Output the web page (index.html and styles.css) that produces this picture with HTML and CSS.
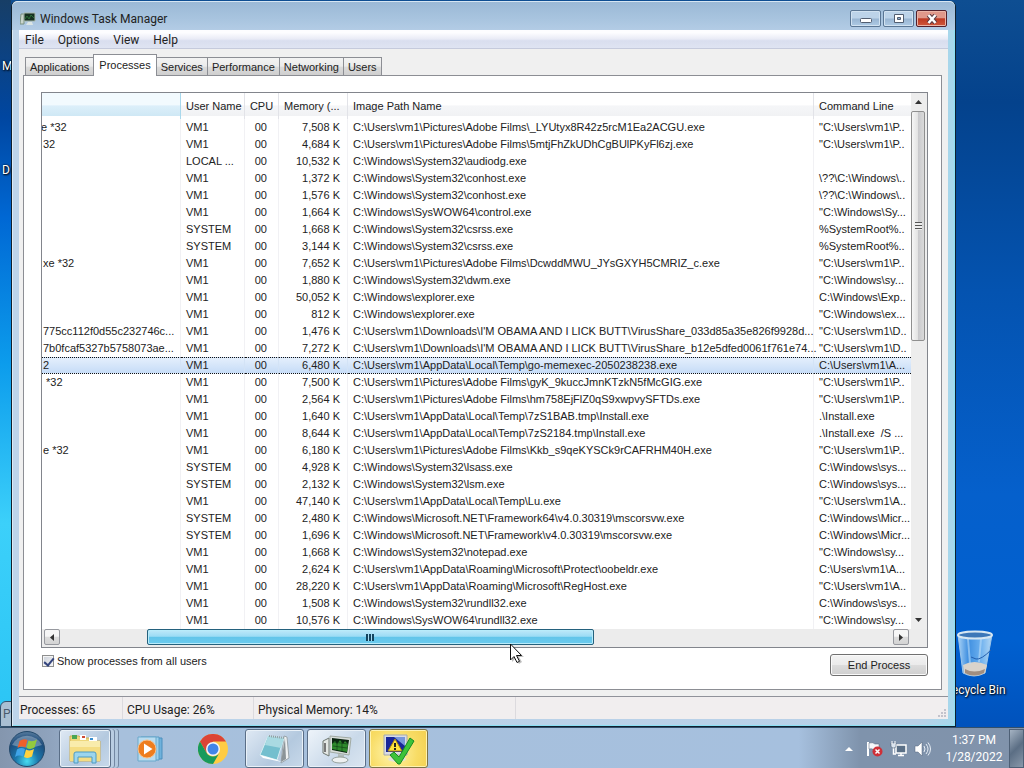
FILE: index.html
```html
<!DOCTYPE html>
<html lang="en">
<head>
<meta charset="utf-8">
<title>Windows Task Manager</title>
<link rel="stylesheet" href="styles.css">
</head>
<body>
<main class="desktop">
  <span class="desk-label label-m">M</span>
  <span class="desk-label label-d">D</span>
  <span class="back-window">P</span>
  <div class="recycle">
    <svg width="38" height="48" viewBox="0 0 38 48" aria-hidden="true">
      <defs><linearGradient id="bin" x1="0" x2="1"><stop offset="0" stop-color="#a9d2f5"/><stop offset=".3" stop-color="#3f8fe0"/><stop offset=".65" stop-color="#69aeee"/><stop offset="1" stop-color="#b5d8f4"/></linearGradient></defs>
      <path d="M2 5 L7 43 Q18 49 29 43 L36 5Z" fill="url(#bin)" stroke="#9cc6ea"/>
      <path d="M7 35 Q18 29 31 35 L29 43 Q18 49 8 43Z" fill="#d9d3cb"/>
      <path d="M9 39 Q18 44 29 39 L28 43 Q18 48 9 43Z" fill="#a18e80"/>
      <path d="M12 9 L14 34 M25 9 L23 32" stroke="#b9dcf8" stroke-width="2" opacity=".6"/>
      <path d="M35 20 Q25 30 20 29 L15 27" fill="none" stroke="#245fae"/>
      <ellipse cx="19" cy="5" rx="17" ry="3.5" fill="#3c77b8" stroke="#d5e6f2" stroke-width="2"/>
    </svg>
    <span>Recycle Bin</span>
  </div>

  <section class="window" aria-label="Windows Task Manager">
    <header class="titlebar">
      <svg width="16" height="14" viewBox="0 0 16 14" aria-hidden="true"><path d="M1 2h3v10H0z" fill="#c9d5cc" stroke="#7b9180"/><path d="M4 1h11v8H4z" fill="#153020" stroke="#a9b8ac"/><path d="M5 7l2-3 2 3 2-4 3 3" fill="none" stroke="#2b6f38"/><path d="M8 10h4l1 3H6z" fill="#dbe5e5"/></svg>
      <h1>Windows Task Manager</h1>
      <div class="caption-buttons">
        <button type="button" aria-label="Minimize"><svg width="14" height="10" viewBox="0 0 14 10"><rect x="1.500" y="4.500" width="11" height="4" rx="1" fill="#fff" stroke="#515d70"/></svg></button>
        <button type="button" aria-label="Maximize"><svg width="14" height="10" viewBox="0 0 14 10"><path d="M2.500 .5h9v8h-9z" fill="#fff" stroke="#515d70"/><path d="M5.500 3.500h3v2h-3z" fill="#8fb0d2" stroke="#515d70"/></svg></button>
        <button type="button" class="close" aria-label="Close"><svg width="14" height="10" viewBox="0 0 14 10"><path d="M3.500 1l7 8M10.500 1l-7 8" stroke="#5b3b42" stroke-width="4.500"/><path d="M3.500 1l7 8M10.500 1l-7 8" stroke="#fff" stroke-width="2.500"/></svg></button>
      </div>
    </header>
    <div class="client">
      <nav class="menubar">
        <button type="button">File</button><button type="button">Options</button><button type="button">View</button><button type="button">Help</button>
      </nav>
      <div class="tabs" role="tablist">
        <button type="button" role="tab">Applications</button><button type="button" role="tab" class="active" aria-selected="true">Processes</button><button type="button" role="tab">Services</button><button type="button" role="tab">Performance</button><button type="button" role="tab">Networking</button><button type="button" role="tab">Users</button>
      </div>
      <div class="panel">
        <div class="list">
          <div class="table-wrap">
            <table>
              <colgroup><col class="c-name"><col class="c-user"><col class="c-cpu"><col class="c-mem"><col class="c-path"><col class="c-cmd"></colgroup>
              <thead><tr><th aria-label="Image Name"></th><th>User Name</th><th>CPU</th><th>Memory (...</th><th>Image Path Name</th><th>Command Line</th></tr></thead>
              <tbody>
                <tr><td class="cut">e *32</td><td>VM1</td><td>00</td><td>7,508 K</td><td>C:\Users\vm1\Pictures\Adobe Films\_LYUtyx8R42z5rcM1Ea2ACGU.exe</td><td>"C:\Users\vm1\P..</td></tr>
                <tr><td>32</td><td>VM1</td><td>00</td><td>4,684 K</td><td>C:\Users\vm1\Pictures\Adobe Films\5mtjFhZkUDhCgBUlPKyFl6zj.exe</td><td>"C:\Users\vm1\P..</td></tr>
                <tr><td></td><td>LOCAL ...</td><td>00</td><td>10,532 K</td><td>C:\Windows\System32\audiodg.exe</td><td></td></tr>
                <tr><td></td><td>VM1</td><td>00</td><td>1,372 K</td><td>C:\Windows\System32\conhost.exe</td><td>\??\C:\Windows\..</td></tr>
                <tr><td></td><td>VM1</td><td>00</td><td>1,576 K</td><td>C:\Windows\System32\conhost.exe</td><td>\??\C:\Windows\..</td></tr>
                <tr><td></td><td>VM1</td><td>00</td><td>1,664 K</td><td>C:\Windows\SysWOW64\control.exe</td><td>"C:\Windows\Sy...</td></tr>
                <tr><td></td><td>SYSTEM</td><td>00</td><td>1,668 K</td><td>C:\Windows\System32\csrss.exe</td><td>%SystemRoot%..</td></tr>
                <tr><td></td><td>SYSTEM</td><td>00</td><td>3,144 K</td><td>C:\Windows\System32\csrss.exe</td><td>%SystemRoot%..</td></tr>
                <tr><td>xe *32</td><td>VM1</td><td>00</td><td>7,652 K</td><td>C:\Users\vm1\Pictures\Adobe Films\DcwddMWU_JYsGXYH5CMRIZ_c.exe</td><td>"C:\Users\vm1\P..</td></tr>
                <tr><td></td><td>VM1</td><td>00</td><td>1,880 K</td><td>C:\Windows\System32\dwm.exe</td><td>"C:\Windows\sy...</td></tr>
                <tr><td></td><td>VM1</td><td>00</td><td>50,052 K</td><td>C:\Windows\explorer.exe</td><td>C:\Windows\Exp..</td></tr>
                <tr><td></td><td>VM1</td><td>00</td><td>812 K</td><td>C:\Windows\explorer.exe</td><td>"C:\Windows\ex...</td></tr>
                <tr><td>775cc112f0d55c232746c...</td><td>VM1</td><td>00</td><td>1,476 K</td><td>C:\Users\vm1\Downloads\I'M OBAMA AND I LICK BUTT\VirusShare_033d85a35e826f9928d...</td><td>"C:\Users\vm1\D..</td></tr>
                <tr><td>7b0fcaf5327b5758073ae...</td><td>VM1</td><td>00</td><td>7,272 K</td><td>C:\Users\vm1\Downloads\I'M OBAMA AND I LICK BUTT\VirusShare_b12e5dfed0061f761e74...</td><td>"C:\Users\vm1\D..</td></tr>
                <tr class="selected"><td>2</td><td>VM1</td><td>00</td><td>6,480 K</td><td>C:\Users\vm1\AppData\Local\Temp\go-memexec-2050238238.exe</td><td>C:\Users\vm1\A...</td></tr>
                <tr><td>&nbsp;*32</td><td>VM1</td><td>00</td><td>7,500 K</td><td>C:\Users\vm1\Pictures\Adobe Films\gyK_9kuccJmnKTzkN5fMcGIG.exe</td><td>"C:\Users\vm1\P..</td></tr>
                <tr><td></td><td>VM1</td><td>00</td><td>2,564 K</td><td>C:\Users\vm1\Pictures\Adobe Films\hm758EjFlZ0qS9xwpvySFTDs.exe</td><td>"C:\Users\vm1\P..</td></tr>
                <tr><td></td><td>VM1</td><td>00</td><td>1,640 K</td><td>C:\Users\vm1\AppData\Local\Temp\7zS1BAB.tmp\Install.exe</td><td>.\Install.exe</td></tr>
                <tr><td></td><td>VM1</td><td>00</td><td>8,644 K</td><td>C:\Users\vm1\AppData\Local\Temp\7zS2184.tmp\Install.exe</td><td>.\Install.exe&nbsp; /S ...</td></tr>
                <tr><td>e *32</td><td>VM1</td><td>00</td><td>6,180 K</td><td>C:\Users\vm1\Pictures\Adobe Films\Kkb_s9qeKYSCk9rCAFRHM40H.exe</td><td>"C:\Users\vm1\P..</td></tr>
                <tr><td></td><td>SYSTEM</td><td>00</td><td>4,928 K</td><td>C:\Windows\System32\lsass.exe</td><td>C:\Windows\sys...</td></tr>
                <tr><td></td><td>SYSTEM</td><td>00</td><td>2,132 K</td><td>C:\Windows\System32\lsm.exe</td><td>C:\Windows\sys...</td></tr>
                <tr><td></td><td>VM1</td><td>00</td><td>47,140 K</td><td>C:\Users\vm1\AppData\Local\Temp\Lu.exe</td><td>"C:\Users\vm1\A..</td></tr>
                <tr><td></td><td>SYSTEM</td><td>00</td><td>2,480 K</td><td>C:\Windows\Microsoft.NET\Framework64\v4.0.30319\mscorsvw.exe</td><td>C:\Windows\Micr...</td></tr>
                <tr><td></td><td>SYSTEM</td><td>00</td><td>1,696 K</td><td>C:\Windows\Microsoft.NET\Framework\v4.0.30319\mscorsvw.exe</td><td>C:\Windows\Micr...</td></tr>
                <tr><td></td><td>VM1</td><td>00</td><td>1,668 K</td><td>C:\Windows\System32\notepad.exe</td><td>"C:\Windows\sy...</td></tr>
                <tr><td></td><td>VM1</td><td>00</td><td>2,624 K</td><td>C:\Users\vm1\AppData\Roaming\Microsoft\Protect\oobeldr.exe</td><td>C:\Users\vm1\A...</td></tr>
                <tr><td></td><td>VM1</td><td>00</td><td>28,220 K</td><td>C:\Users\vm1\AppData\Roaming\Microsoft\RegHost.exe</td><td>"C:\Users\vm1\A..</td></tr>
                <tr><td></td><td>VM1</td><td>00</td><td>1,508 K</td><td>C:\Windows\System32\rundll32.exe</td><td>C:\Windows\sys...</td></tr>
                <tr><td></td><td>VM1</td><td>00</td><td>10,576 K</td><td>C:\Windows\SysWOW64\rundll32.exe</td><td>"C:\Windows\sy...</td></tr>
              </tbody>
            </table>
          </div>
          <div class="vscroll">
            <button type="button" aria-label="Scroll up"><svg width="7" height="4" viewBox="0 0 7 4"><path d="M0 4L3.500 0 7 4z" fill="#333"/></svg></button>
            <div class="vtrack"><div class="vthumb"><i></i></div></div>
            <button type="button" aria-label="Scroll down"><svg width="7" height="4" viewBox="0 0 7 4"><path d="M0 0h7L3.500 4z" fill="#333"/></svg></button>
          </div>
          <div class="hscroll">
            <button type="button" aria-label="Scroll left"><svg width="4" height="7" viewBox="0 0 4 7"><path d="M4 0v7L0 3.500z" fill="#333"/></svg></button>
            <div class="htrack"><div class="hthumb"><i></i></div></div>
            <button type="button" aria-label="Scroll right"><svg width="4" height="7" viewBox="0 0 4 7"><path d="M0 0v7l4-3.500z" fill="#333"/></svg></button>
          </div>
        </div>
        <div class="actions">
          <label><input type="checkbox" checked>Show processes from all users</label>
          <button type="button" class="end">End Process</button>
        </div>
      </div>
      <footer class="statusbar">
        <span class="s1">Processes: 65</span><span class="s2">CPU Usage: 26%</span><span class="s3">Physical Memory: 14%</span>
        <svg class="grip" width="10" height="10" viewBox="0 0 10 10" aria-hidden="true"><path d="M7 1h2v2H7zM4 4h2v2H4zM7 4h2v2H7zM1 7h2v2H1zM4 7h2v2H4zM7 7h2v2H7z" fill="#c3c3cc"/></svg>
      </footer>
    </div>
  </section>
  <svg class="cursor" width="15" height="22" viewBox="0 0 15 22" aria-hidden="true"><path d="M3 3v16l4-4 3 6 3-2-3-5h5z" fill="#000" opacity=".25"/><path d="M1.500 1v16l3.500-3.500 3 6 2.500-1.200-3-5.800h5z" fill="#fff" stroke="#111"/></svg>
</main>

<footer class="taskbar">
  <button type="button" class="start" aria-label="Start">
    <svg width="38" height="38" viewBox="0 0 38 38">
      <defs><radialGradient id="orb" cx=".5" cy=".85" r=".8"><stop offset="0" stop-color="#47dcf0"/><stop offset=".4" stop-color="#1b78ac"/><stop offset=".8" stop-color="#1d4c7c"/><stop offset="1" stop-color="#4c7297"/></radialGradient></defs>
      <circle cx="19" cy="19" r="17.500" fill="url(#orb)" stroke="#23496b"/>
      <path d="M4 15A16 14 0 0 1 34 15Q19 20 4 15z" fill="#fff" opacity=".3"/>
      <path d="M11.500 11q4-3 8-1l-2 7.500q-4-2-8 .5z" fill="#f0602b"/><path d="M20.500 10.500q4 2 8.500-1l-2.500 8q-4 2.500-8 .5z" fill="#93ca3e"/>
      <path d="M9 19.500q4-2.500 8-.5l-2 7.500q-4-2-8 .5z" fill="#3fa4e8"/><path d="M18 19.500q4 2 8-.5l-2 7.500q-4 2.500-8 .5z" fill="#ffd23f"/>
    </svg>
  </button>
  <button type="button" class="task stacked" aria-label="Windows Explorer">
    <svg width="34" height="32" viewBox="0 0 34 32"><path d="M2 3h9l2 2h9v3h10v20H2z" fill="#eed77c" stroke="#cdb059"/><path d="M4 2h5v4H4z" fill="#49a553"/><path d="M12 2h6v5h-6z" fill="#fff"/><path d="M14 3h3v2h-3z" fill="#cf4b35"/><path d="M21 4h8v4h-8z" fill="#fff"/><path d="M22 5h3v2h-3z" fill="#3b8fd0"/><path d="M2 8h30v20H2z" fill="#f9ecac"/><path d="M2 14h30v14H2z" fill="#f4dd83"/><path d="M6 30v-9q0-2 2-2h18q2 0 2 2v9h-4v-6H10v6z" fill="#9bd5ee" stroke="#4d9bc3"/></svg>
  </button>
  <button type="button" class="launch wmp" aria-label="Windows Media Player">
    <svg width="28" height="28" viewBox="0 0 28 28"><path d="M8 3h18v21H8z" fill="#6fb2dc" stroke="#4c8fbd"/><path d="M5 2h18v23H5z" fill="#9dd0ec" stroke="#599dc6"/><path d="M2 2h18v24H2z" fill="#b9dcf0" stroke="#6aa9cb"/><circle cx="11" cy="14" r="9" fill="#ee7d1e" stroke="#f8c08a"/><path d="M8 8.500v11l8.500-5.500z" fill="#fff"/></svg>
  </button>
  <button type="button" class="launch chrome" aria-label="Google Chrome">
    <svg width="30" height="30" viewBox="0 0 30 30"><circle cx="15" cy="15" r="15" fill="#fc4"/><path d="M2 7.500A15 15 0 0 1 28 7.500H15L8.500 18.750z" fill="#dc4436"/><path d="M2 7.500L8.500 18.750A7.500 7.500 0 0 0 21.500 18.750L15 30A15 15 0 0 1 2 7.500z" fill="#179a5c"/><circle cx="15" cy="15" r="7" fill="#f4f6f8"/><circle cx="15" cy="15" r="5.500" fill="#4285e8"/></svg>
  </button>
  <button type="button" class="task" aria-label="Notepad">
    <svg width="34" height="32" viewBox="0 0 34 32"><path d="M26 3l3 1 2 21-8 5z" fill="#eef1f2" stroke="#9aa5ab"/><path d="M27 5l1 21-5 3z" fill="#8b9498"/><path d="M10 3l16 2-7 22-17-5z" fill="#74bfce" stroke="#d6eef2"/><path d="M10 3l16 2-3 10-16-3z" fill="#a9dae2"/><path d="M2 22l17 5 5 2-19-4z" fill="#fff"/><path d="M11 3l15 2" stroke="#919da1" stroke-width="2" stroke-dasharray="1 1"/></svg>
  </button>
  <button type="button" class="task current" aria-label="Windows Task Manager">
    <svg width="34" height="32" viewBox="0 0 34 32"><path d="M3 8l6-3v18l-6-3z" fill="#e3e7e4" stroke="#6e7771"/><path d="M5 10v9" stroke="#777" stroke-width="2"/><path d="M10 3l21 2-2 17-19-3z" fill="#d8deda" stroke="#a1aaa3"/><path d="M12 5l17 2-2 13-15-3z" fill="#0c2411"/><path d="M12 11l3-3 2 3 3-4 3 4 2-3 3 3-1 8-15-3z" fill="#2f8a2c"/><path d="M13 9l15 2M13 13l14 2M17 6v12M22 7v12" stroke="#0f3a14" stroke-width=".6"/><path d="M18 21l6 1v4h-6z" fill="#b2bbb8"/><ellipse cx="20" cy="27" rx="8" ry="3" fill="#eef1f1" stroke="#96a19c"/></svg>
  </button>
  <button type="button" class="task alert" aria-label="Warning">
    <svg width="34" height="32" viewBox="0 0 34 32"><path d="M2 2h23v20H2z" fill="#d9dce4" stroke="#a5a8ae"/><path d="M4 4h19v15H4z" fill="#192699"/><path d="M12 4h11v9z" fill="#7796db"/><ellipse cx="15" cy="26" rx="9" ry="3" fill="#e3e1da"/><path d="M13 6l7 12H6z" fill="#ffe33c" stroke="#a98612"/><path d="M13 10v4M13 15v2" stroke="#222" stroke-width="2"/><path d="M8 22l4-3 5 5L28 5l4 3-14 23h-2z" fill="#3dc33a" stroke="#178b24"/></svg>
  </button>
  <div class="tray">
    <svg class="chev" width="9" height="6" viewBox="0 0 9 6" aria-hidden="true"><path d="M0 5h8L4 1z" fill="#fff"/></svg>
    <svg width="18" height="16" viewBox="0 0 18 16" aria-hidden="true"><path d="M2 1v14" stroke="#fff" stroke-width="2"/><path d="M3 2q4-1 6 1h4v6H8q-2-2-5-1z" fill="#f6f8fb" stroke="#56667b" stroke-width=".5"/><circle cx="11.500" cy="10.500" r="5" fill="#cf3038"/><path d="M9.500 8.500l4 4M13.500 8.500l-4 4" stroke="#fff" stroke-width="1.500"/></svg>
    <svg width="18" height="16" viewBox="0 0 18 16" aria-hidden="true"><path d="M6 4h10v8H6z" fill="#5b7087" stroke="#fff" stroke-width="1.500"/><path d="M8 14.500h6M11 12v2M3.500 7v6H6" fill="none" stroke="#fff" stroke-width="1.500"/><path d="M1 2h5v3q0 2-2.500 2T1 5z" fill="#dce5ef" stroke="#45566b" stroke-width=".5"/><path d="M2 0v3M5 0v3" stroke="#fff"/></svg>
    <svg width="18" height="16" viewBox="0 0 18 16" aria-hidden="true"><path d="M1 5h3l4-4v14l-4-4H1z" fill="#fff" stroke="#54667d" stroke-width=".5"/><path d="M10 5q2 3 0 6M12 3q4 5 0 10M14 1.500q5 6.500 0 13" fill="none" stroke="#e7eef6"/></svg>
  </div>
  <time class="clock" datetime="2022-01-28T13:37"><span>1:37 PM</span><span>1/28/2022</span></time>
  <button type="button" class="show-desktop" aria-label="Show desktop"></button>
</footer>
</body>
</html>
```
FILE: styles.css
```css
* { box-sizing: border-box; }
body {
  margin: 0;
  display: flex;
  flex-direction: column;
  min-height: 100vh;
  font-family: Roboto, sans-serif;
  font-size: 12px;
  color: #222;
  overflow: hidden;
}
button { font: inherit; color: inherit; margin: 0; padding: 0; border: 0; background: none; }
svg { display: block; flex: none; }

.desktop {
  position: relative;
  flex: 1;
  padding: 1px 68px 0 11px;
  display: flex;
  background:
    linear-gradient(#173e66, #0046a0 16%, #0068d4 30%, #0c9cec 50%, #3cd0fa 72%, #2ac4f4 100%) left / 11px 100% no-repeat,
    linear-gradient(#0e4e92, #04428c 14%, #0453b0 40%, #0560cc 68%, #0060d0 88%, #0052bc);
}
.desk-label, .recycle { color: #fff; text-shadow: 1px 1px 2px #000, 0 0 2px #000; }
.desk-label { position: absolute; left: 2px; line-height: 16px; }
.label-m { top: 58px; }
.label-d { top: 162px; }
.back-window {
  position: absolute;
  left: 0;
  bottom: 0;
  width: 24px;
  height: 26px;
  padding: 5px 2px;
  border: 1px solid #33516e;
  border-radius: 6px 0 0 0;
  background: #a9bfd3;
  color: #4a5b6d;
}
.recycle {
  position: absolute;
  right: 18px;
  bottom: 29px;
  width: 62px;
  display: flex;
  flex-direction: column;
  align-items: center;
  gap: 4px;
  line-height: 16px;
  white-space: nowrap;
}

.window {
  position: relative;
  flex: 1;
  min-width: 0;
  display: flex;
  flex-direction: column;
  padding: 0 7px 7px;
  border: solid #10202e;
  border-width: 0 1px 1px;
  border-radius: 6px 6px 0 0;
  background: linear-gradient(90deg, #bdd4ea, #b8d0e7 96%, #a5d8ec);
  box-shadow: inset 1px 1px 0 #dcebf6, inset -1px -1px 0 #8ce0f4;
}
.titlebar {
  display: flex;
  align-items: center;
  height: 29px;
  margin: 0 -7px;
  padding: 5px 8px 0 8px;
  border-radius: 6px 6px 0 0;
  gap: 4px;
  border-top: 1px solid #d6e6f3;
  background: linear-gradient(#9bb9d6, #a8c4df 60%, #b3cce5);
}
.titlebar h1 { flex: 1; margin: 0; font-size: 12px; font-weight: 400; line-height: 16px; }
.caption-buttons { display: flex; gap: 2px; }
.caption-buttons button {
  display: flex;
  align-items: center;
  justify-content: center;
  width: 31px;
  height: 17px;
  border: 1px solid #5a7694;
  border-radius: 2px;
  background: linear-gradient(#bcd3e9 48%, #98b5d2 52%, #aecae4);
  box-shadow: inset 0 0 0 1px #d1e2f1;
}
.caption-buttons .close {
  border-color: #52202c;
  background: linear-gradient(#e0988a 45%, #bd3a23 52%, #d0583c);
  box-shadow: inset 0 0 0 1px #eab4a6;
}
.client { flex: 1; display: flex; flex-direction: column; background: #f0f0f0; }
.menubar {
  display: flex;
  height: 19px;
  padding-left: 6px;
  gap: 14px;
  padding-top: 2px;
  line-height: 16px;
  background: linear-gradient(#fdfdff 15%, #e9ebf6 50%, #d9deef 60%, #dfe4f2);
  border-bottom: 1px solid #c5cadc;
}
.tabs, .list, .actions { font-family: "Liberation Sans", Arial, sans-serif; font-size: 11px; }
.tabs { display: flex; align-items: flex-end; height: 26px; padding-left: 6px; }
.tabs button {
  height: 18px;
  padding: 0 4px;
  line-height: 18px;
  border: 1px solid #8c8e94;
  border-bottom: 0;
  border-left-width: 0;
  background: linear-gradient(#f3f3f3, #ebebeb 48%, #dadada 54%, #cfcfcf);
}
.tabs button:first-child { border-left-width: 1px; }
.tabs .active {
  position: relative;
  height: 22px;
  padding: 0 5px 2px;
  margin: 0 0 -1px -1px;
  border-left-width: 1px;
  background: #fff;
}
.panel {
  flex: 1;
  display: flex;
  flex-direction: column;
  margin: 0 6px 0 4px;
  padding: 16px 13px 0 17px;
  border: 1px solid #8c8e94;
  background: #fff;
}
.list {
  display: grid;
  grid-template-columns: minmax(0, 1fr) 16px;
  grid-template-rows: auto 18px;
  border: 1px solid #82858c;
}
.table-wrap { overflow: hidden; }
table { width: 100%; table-layout: fixed; border-collapse: separate; border-spacing: 0; }
.c-name { width: 139px; }
.c-user { width: 64px; }
.c-cpu { width: 34px; }
.c-mem { width: 69px; }
.c-cmd { width: 97px; }
th, td { padding: 0 0 0 5px; text-align: left; font-weight: 400; white-space: nowrap; overflow: hidden; border-right: 1px solid #f1f1f4; }
th { height: 26px; border-right-color: #e2e3e8; background: linear-gradient(#fff 45%, #f5f6f8 50%, #f1f2f4 88%, #fff 90%); }
th:first-child { background: linear-gradient(#f2fafe 45%, #dceffa 50%, #cfe8f5 88%, #fff 90%); border-right-color: #a9d8ec; }
td { height: 17px; line-height: 17px; }
td:first-child { padding-left: 1px; }
td.cut { text-indent: -2px; }
th:nth-child(3) { text-align: center; padding: 0; }
td:nth-child(3) { text-align: right; padding-right: 11px; }
td:nth-child(4) { text-align: right; padding-right: 7px; }
td:nth-child(5) { overflow: visible; }
th:last-child, td:last-child { border-right: 0; }
.selected td { line-height: 15px; border-top: 1px dotted #111; border-bottom: 1px dotted #111; background: linear-gradient(#e4effc, #c6dcf7); }
.selected td:not(:last-child) { border-right: 1px solid #d3e3f6; }

.vscroll { display: flex; flex-direction: column; background: #ededed; }
.vscroll button { display: flex; align-items: center; justify-content: center; width: 14px; height: 18px; }
.vtrack { flex: 1; }
.vthumb { display: flex; align-items: center; justify-content: center; width: 14px; height: 46%; border: 1px solid #8f8f8f; border-radius: 2px; background: linear-gradient(90deg, #f6f6f6, #e3e3e3 48%, #c9c9cc 52%, #dadada); }
.vthumb i { width: 7px; height: 8px; background: repeating-linear-gradient(#555 0 1px, #eee 1px 3px); }
.hscroll { grid-column: 1 / 3; display: flex; padding: 0 18px 2px 2px; background: #ececec; }
.hscroll button { display: flex; align-items: center; justify-content: center; width: 16px; border: 1px solid #97999f; border-radius: 2px; background: linear-gradient(#f6f6f6 45%, #dcdcdc 50%, #d4d4d4); }
.htrack { flex: 1; padding-left: 10%; }
.hthumb { display: flex; align-items: center; justify-content: center; width: 60%; height: 16px; border: 1px solid #24617d; border-radius: 2px; background: linear-gradient(#bfe9f9, #9bdcf5 45%, #62c5ea 52%, #6ccbee); box-shadow: inset 0 0 0 1px #b8ecfb; }
.hthumb i { width: 8px; height: 7px; background: repeating-linear-gradient(90deg, #14455e 0 2px, #a9def3 2px 3px); }

.actions { display: flex; justify-content: space-between; padding-top: 6px; }
.actions label { display: flex; align-items: center; height: 14px; gap: 3px; }
.actions input {
  appearance: none;
  width: 12px;
  height: 12px;
  margin: 0 0 0 1px;
  border: 1px solid #8e8f8f;
  background: linear-gradient(135deg, #cbd0d8, #f4f5f7);
  box-shadow: inset 0 0 0 1px #f4f4f4;
}
.actions input:checked::before {
  content: "";
  display: block;
  width: 4px;
  height: 8px;
  margin: 0 0 0 3px;
  border: solid #35457e;
  border-width: 0 2px 2px 0;
  transform: rotate(40deg);
}
.end { width: 98px; height: 22px; border: 1px solid #707070; border-radius: 3px; background: linear-gradient(#f3f3f3, #ebebeb 48%, #dcdcdc 52%, #cfcfcf); box-shadow: inset 0 0 0 1px #fafafa; }
.statusbar { position: relative; display: flex; margin-top: 6px; height: 23px; line-height: 26px; border-top: 1px solid #90929a; background: #f1eeef; }
.statusbar span { padding-left: 4px; border-right: 1px solid #dcdade; white-space: nowrap; }
.statusbar .s1 { width: 104px; padding-left: 1px; }
.s2 { width: 131px; }
.s3 { width: 262px; }
.grip { position: absolute; right: 1px; bottom: 1px; }
.cursor { position: absolute; left: 509px; top: 643px; }

.taskbar {
  display: flex;
  align-items: stretch;
  height: 41px;
  padding-top: 1px;
  border-top: 1px solid #32506c;
  background: linear-gradient(90deg, #8496ae, #8fa3bd 50px, #a7c0dc 120px, #a6c0de 78%, #7f93ac 84%, #8193ab 100%);
}
.taskbar button { display: flex; align-items: center; justify-content: center; }
.start { width: 54px; margin-right: 5px; }
.task { width: 59px; margin-right: 3px; border: 1px solid #5a6e87; border-radius: 3px; background: linear-gradient(135deg, #dfe9f4, #b4c9df 60%, #c8d9ea); box-shadow: inset 0 0 0 1px #e9f1f8; }
.taskbar .stacked { width: 52px; margin-right: 15px; box-shadow: inset 0 0 0 1px #e9f1f8, 3px 0 0 #b9cde2, 4px 0 0 #7388a3, 7px 0 0 #b2c8de, 8px 0 0 #7388a3; }
.launch { width: 48px; }
.chrome { margin: 0 8px 0 15px; }
.current { background: linear-gradient(135deg, #eef4fa, #c9d9e9 60%, #dbe6f1); }
.alert { background: radial-gradient(circle at 40% 60%, #fff6b0, #f8dc65 60%, #f3cf4e); border-color: #7c7346; box-shadow: inset 0 0 0 1px #fff3b0; }
.tray { margin-left: auto; display: flex; align-items: center; gap: 6px; padding-right: 13px; }
.chev { margin-right: 6px; }
.clock { display: flex; flex-direction: column; align-items: center; justify-content: center; width: 58px; margin-right: 6px; color: #fff; line-height: 17px; font-size: 12px; }
.show-desktop { width: 15px; border: 1px solid #4e6076; background: linear-gradient(135deg, #a5b3c3, #5b6e84 50%, #8998aa); }
```
